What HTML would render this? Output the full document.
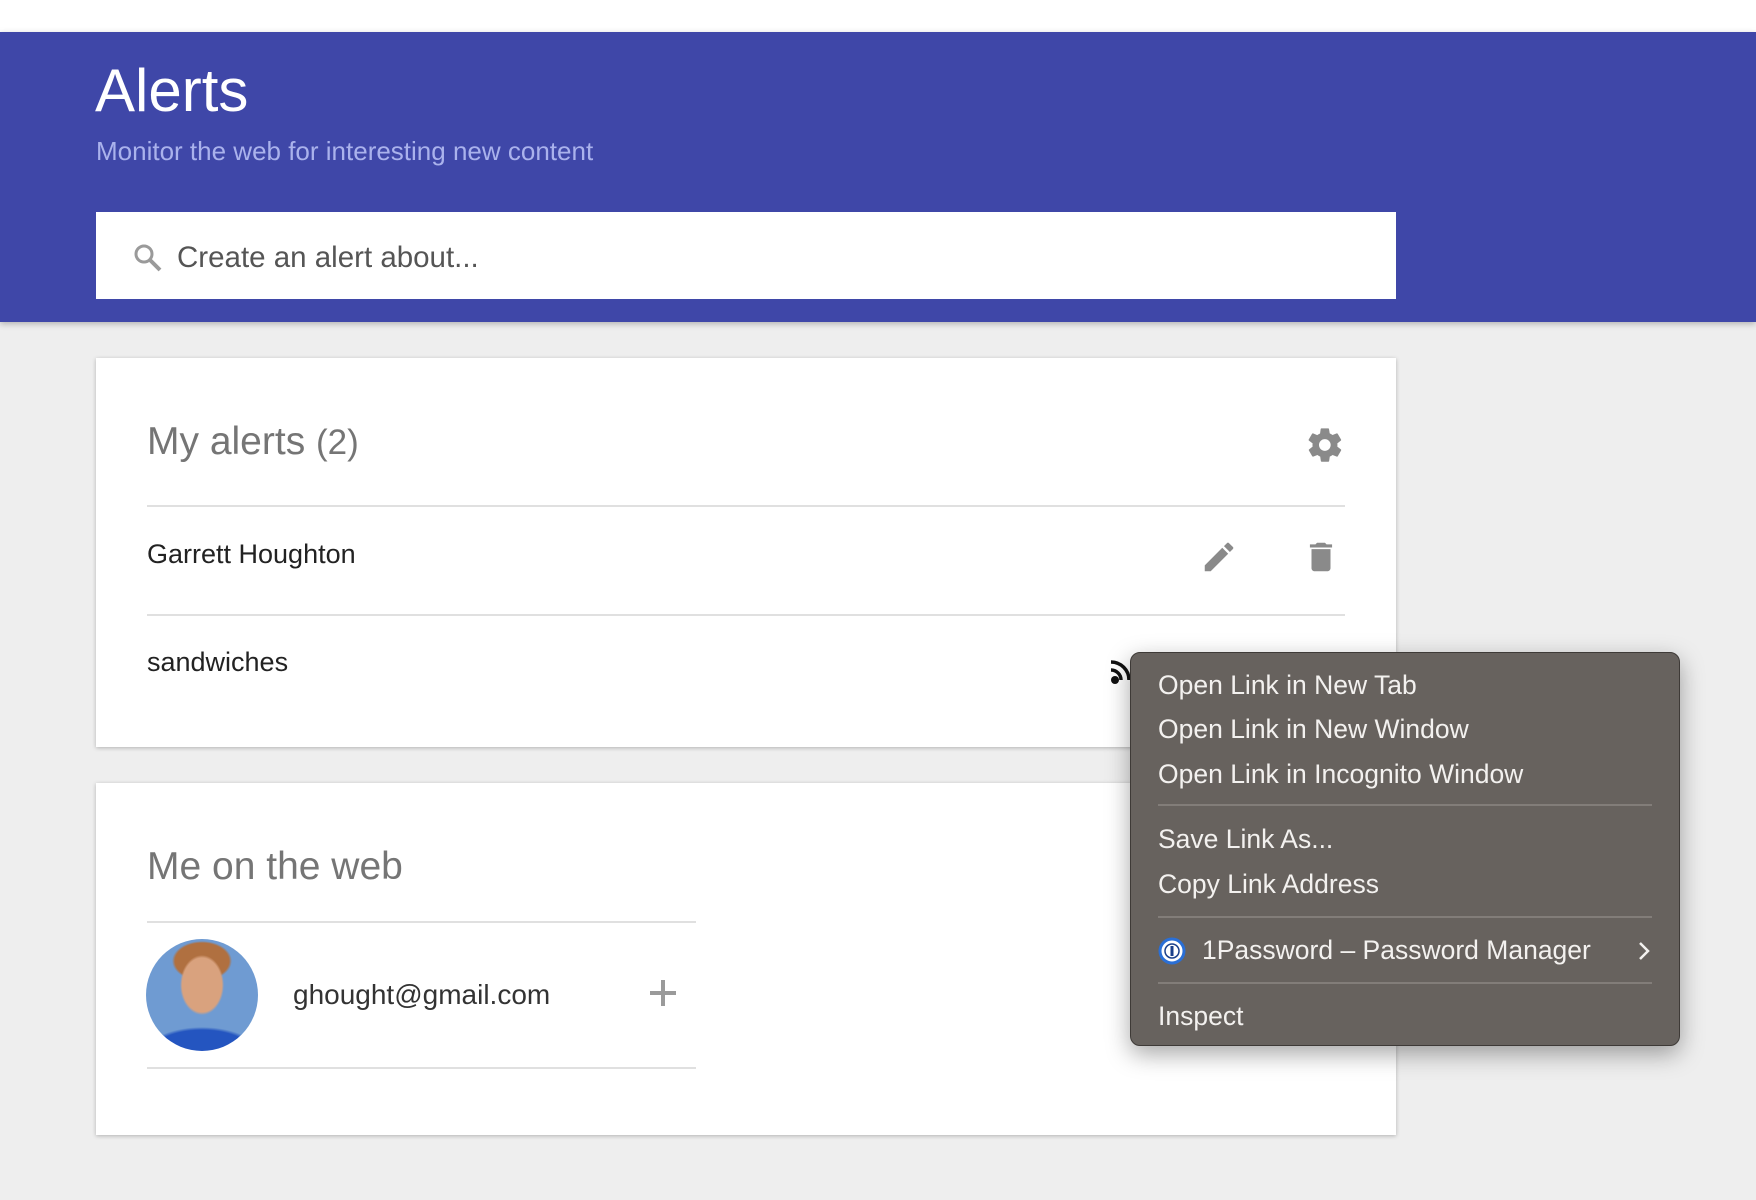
<!DOCTYPE html>
<html><head><meta charset="utf-8"><style>
*{margin:0;padding:0;box-sizing:border-box}
body{width:1756px;height:1200px;background:#eeeeee;font-family:"Liberation Sans",sans-serif;position:relative;overflow:hidden}
.abs{position:absolute}
.hdr{left:0;top:32px;width:1756px;height:290px;background:#3f47a8;box-shadow:0 2px 6px rgba(0,0,0,.25)}
.card{background:#fff;box-shadow:0 1px 4px rgba(0,0,0,.25)}
.line{height:2px;background:#e0e0e0}
.t{white-space:nowrap}
.menu{left:1130px;top:652px;width:550px;height:394px;background:#67625e;border-radius:10px;border:1px solid #3e3a37;box-shadow:0 8px 24px rgba(0,0,0,.35)}
.mi{position:absolute;left:27px;color:#f3f1ef;font-size:26.5px;white-space:nowrap;line-height:30px}
.sep{position:absolute;left:27px;width:494px;height:2px;background:#827d79}
</style></head><body>
<div class="abs" style="left:0;top:0;width:1756px;height:32px;background:#fff"></div>
<div class="abs hdr"></div>
<div class="abs t" style="left:95px;top:56px;font-size:60px;color:#fff">Alerts</div>
<div class="abs t" style="left:96px;top:136px;font-size:26px;color:#aab2ec">Monitor the web for interesting new content</div>
<div class="abs" style="left:96px;top:212px;width:1300px;height:87px;background:#fff"></div>
<svg class="abs" style="left:132px;top:242px" width="32" height="32" viewBox="0 0 32 32"><circle cx="12" cy="12" r="8" fill="none" stroke="#9a9a9a" stroke-width="3"/><line x1="18" y1="18" x2="28" y2="28" stroke="#9a9a9a" stroke-width="4"/></svg>
<div class="abs t" style="left:177px;top:241px;font-size:29.5px;color:#555">Create an alert about...</div>

<div class="abs card" style="left:96px;top:358px;width:1300px;height:389px"></div>
<div class="abs t" style="left:147px;top:420px;font-size:39px;color:#757575">My alerts <span style="font-size:35px">(2)</span></div>
<svg class="abs" style="left:1305px;top:425px" width="40" height="40" viewBox="0 0 24 24"><path fill="#8a8a8a" d="M19.4 13c.04-.32.06-.66.06-1s-.02-.68-.06-1l2.1-1.65c.2-.15.24-.42.12-.64l-2-3.460c-.12-.22-.39-.3-.61-.22l-2.49 1c-.52-.4-1.08-.73-1.690-.98L14.4 2.4A.49.49 0 0 0 13.9 2h-4c-.25 0-.46.18-.49.42l-.38 2.65c-.61.25-1.17.59-1.69.98l-2.49-1c-.23-.09-.49 0-.61.22l-2 3.46c-.13.22-.07.49.12.64L4.57 11c-.04.32-.07.66-.07 1s.03.68.07 1l-2.11 1.65c-.19.15-.24.42-.12.64l2 3.46c.12.22.39.3.61.22l2.49-1c.52.4 1.08.73 1.69.98l.38 2.65c.03.24.24.42.49.42h4c.25 0 .46-.18.49-.42l.38-2.65c.61-.25 1.17-.59 1.69-.98l2.49 1c.23.09.49 0 .61-.22l2-3.46c.12-.22.07-.49-.12-.64L19.4 13zM11.9 15.5a3.5 3.5 0 1 1 0-7 3.5 3.5 0 0 1 0 7z"/></svg>
<div class="abs line" style="left:147px;top:505px;width:1198px"></div>
<div class="abs t" style="left:147px;top:539px;font-size:27px;color:#222">Garrett Houghton</div>
<svg class="abs" style="left:1200px;top:538px" width="38" height="38" viewBox="0 0 24 24"><path fill="#8a8a8a" d="M3 17.25V21h3.75L17.81 9.940l-3.75-3.75L3 17.25zM20.71 7.04a1 1 0 0 0 0-1.41l-2.34-2.34a1 1 0 0 0-1.41 0l-1.83 1.83 3.75 3.75 1.83-1.83z"/></svg>
<svg class="abs" style="left:1302px;top:538px" width="38" height="38" viewBox="0 0 24 24"><path fill="#8a8a8a" d="M6 19c0 1.1.9 2 2 2h8c1.1 0 2-.9 2-2V7H6v12zM19 4h-3.5l-1-1h-5l-1 1H5v2h14V4z"/></svg>
<div class="abs line" style="left:147px;top:614px;width:1198px"></div>
<div class="abs t" style="left:147px;top:647px;font-size:27px;color:#222">sandwiches</div>
<svg class="abs" style="left:1108px;top:652px" width="24" height="36" viewBox="0 0 24 36"><circle cx="7" cy="28" r="4" fill="#111"/><path d="M3 18a10 10 0 0 1 10 10M3 10a18 18 0 0 1 18 18" stroke="#111" stroke-width="3.5" fill="none"/></svg>

<div class="abs card" style="left:96px;top:783px;width:1300px;height:352px"></div>
<div class="abs t" style="left:147px;top:845px;font-size:39px;color:#757575">Me on the web</div>
<div class="abs line" style="left:147px;top:921px;width:549px"></div>
<div class="abs" style="left:146px;top:939px;width:112px;height:112px;border-radius:50%;background:radial-gradient(ellipse 22px 30px at 56px 46px,#d9a27e 90%,transparent 100%),radial-gradient(ellipse 30px 20px at 56px 22px,#b07040 90%,transparent 100%),radial-gradient(ellipse 60px 30px at 56px 118px,#2455c0 90%,transparent 100%),#6f9bd2"></div>
<div class="abs t" style="left:293px;top:979px;font-size:28px;color:#333">ghought@gmail.com</div>
<svg class="abs" style="left:646px;top:976px" width="34" height="34" viewBox="0 0 34 34"><path d="M17 4v26M4 17h26" stroke="#9a9a9a" stroke-width="4"/></svg>
<div class="abs line" style="left:147px;top:1067px;width:549px"></div>

<div class="abs menu">
<div class="mi" style="top:17px">Open Link in New Tab</div>
<div class="mi" style="top:61px">Open Link in New Window</div>
<div class="mi" style="top:106px">Open Link in Incognito Window</div>
<div class="sep" style="top:151px"></div>
<div class="mi" style="top:171px">Save Link As...</div>
<div class="mi" style="top:216px">Copy Link Address</div>
<div class="sep" style="top:263px"></div>
<svg style="position:absolute;left:27px;top:284px" width="28" height="28" viewBox="0 0 28 28"><circle cx="14" cy="14" r="12" fill="#fff" stroke="#2a6fd6" stroke-width="3"/><circle cx="14" cy="14" r="7" fill="none" stroke="#1a3f8a" stroke-width="1.5"/><rect x="12.5" y="9" width="3" height="10" fill="#1a3f8a"/></svg>
<div class="mi" style="top:282px;left:71px">1Password – Password Manager</div>
<svg style="position:absolute;left:505px;top:287px" width="16" height="22" viewBox="0 0 16 22"><path d="M4 3l8 8-8 8" stroke="#f3f1ef" stroke-width="2.5" fill="none"/></svg>
<div class="sep" style="top:329px"></div>
<div class="mi" style="top:348px">Inspect</div>
</div>
</body></html>
